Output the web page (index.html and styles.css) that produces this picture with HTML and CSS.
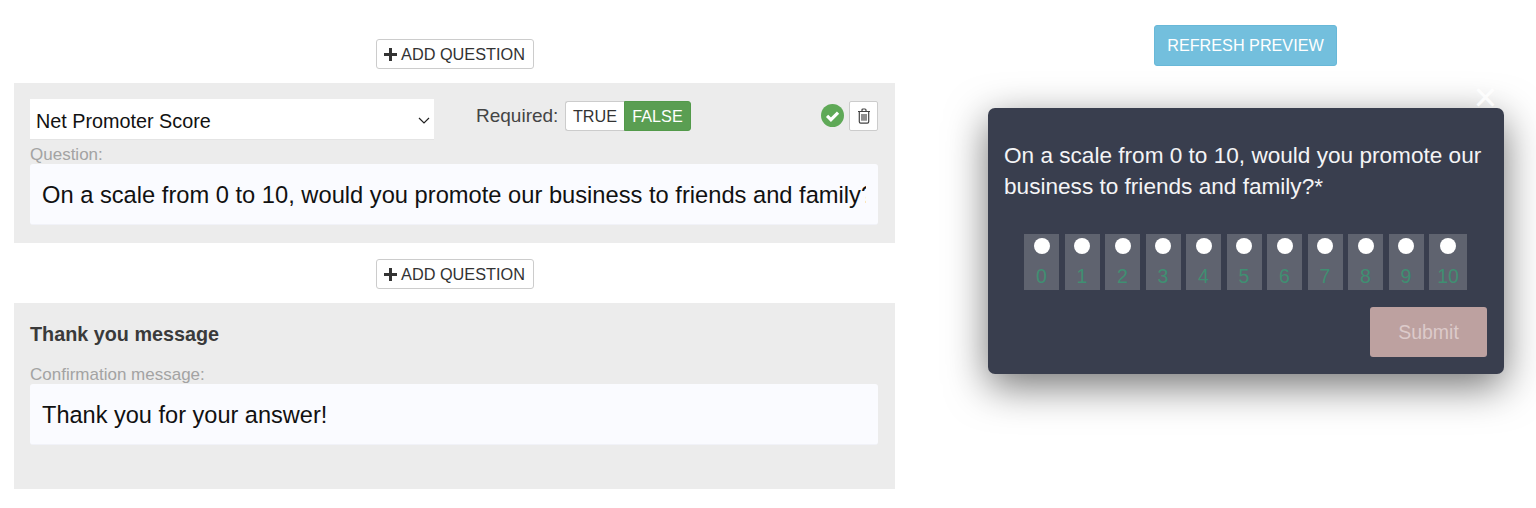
FILE: index.html
```html
<!DOCTYPE html>
<html lang="en">
<head>
  <meta charset="UTF-8">
  <title>Survey editor</title>
  <link rel="stylesheet" href="styles.css">
</head>
<body>
  <div class="editor">
    <div class="add-row">
      <button class="add-btn"><svg class="plus" viewBox="0 0 14 14"><path d="M5.4 0h3.2v5.4H14v3.2H8.6V14H5.4V8.6H0V5.4h5.4z"/></svg>ADD QUESTION</button>
    </div>
    <div class="panel">
      <div class="top-row">
        <div class="select-wrap">
          <select class="type-select"><option>Net Promoter Score</option></select>
          <svg class="chevron" viewBox="0 0 12 7"><path d="M1 1l5 5 5-5"/></svg>
        </div>
        <span class="req-label">Required:</span>
        <div class="toggle">
          <button class="toggle-btn">TRUE</button>
          <button class="toggle-btn active">FALSE</button>
        </div>
        <svg class="check" viewBox="0 0 22 22"><circle cx="11" cy="11" r="11"/><path d="M5.8 11.3l3.7 3.7 6.8-6.8"/></svg>
        <button class="trash-btn">
          <svg viewBox="0 0 14 16"><path d="M1 3.5h12M5 3.2V2q0-1 1-1h2q1 0 1 1v1.2M2.3 3.5v10.3q0 1.4 1.4 1.4h6.6q1.4 0 1.4-1.4V3.5M5 6v6.8M7 6v6.8M9 6v6.8"/></svg>
        </button>
      </div>
      <label class="field-label">Question:</label>
      <input class="text-input" type="text" value="On a scale from 0 to 10, would you promote our business to friends and family?">
    </div>
    <div class="add-row second">
      <button class="add-btn"><svg class="plus" viewBox="0 0 14 14"><path d="M5.4 0h3.2v5.4H14v3.2H8.6V14H5.4V8.6H0V5.4h5.4z"/></svg>ADD QUESTION</button>
    </div>
    <div class="panel thanks">
      <h3 class="panel-title">Thank you message</h3>
      <label class="field-label">Confirmation message:</label>
      <input class="text-input" type="text" value="Thank you for your answer!">
    </div>
  </div>

  <div class="preview">
    <button class="refresh-btn">REFRESH PREVIEW</button>
    <div class="popup">
      <span class="close">&times;</span>
      <p class="popup-question">On a scale from 0 to 10, would you promote our business to friends and family?*</p>
      <div class="scale">
        <label class="cell"><span class="dot"></span>0</label>
        <label class="cell"><span class="dot"></span>1</label>
        <label class="cell"><span class="dot"></span>2</label>
        <label class="cell"><span class="dot"></span>3</label>
        <label class="cell"><span class="dot"></span>4</label>
        <label class="cell"><span class="dot"></span>5</label>
        <label class="cell"><span class="dot"></span>6</label>
        <label class="cell"><span class="dot"></span>7</label>
        <label class="cell"><span class="dot"></span>8</label>
        <label class="cell"><span class="dot"></span>9</label>
        <label class="cell"><span class="dot"></span>10</label>
      </div>
      <div class="submit-row">
        <button class="submit">Submit</button>
      </div>
    </div>
  </div>
</body>
</html>
```

FILE: styles.css
```css
html {
  height: 100%;
}
* {
  box-sizing: border-box;
}
body {
  margin: 0;
  background: #fff;
  font-family: "Liberation Sans", Arial, sans-serif;
  display: flex;
  overflow: hidden;
  color: #333;
}
button {
  font-family: inherit;
}

/* left side */
.editor {
  width: 881px;
  margin-left: 14px;
  padding-top: 39px;
  flex: none;
}
.add-row {
  display: flex;
  justify-content: center;
  margin-bottom: 14px;
}
.add-row.second {
  margin-top: 16px;
  margin-bottom: 14px;
}
.add-btn {
  width: 158px;
  height: 30px;
  padding: 1px 0 0;
  background: #fff;
  border: 1px solid #ccc;
  border-radius: 3px;
  color: #333;
  font-size: 16.3px;
  display: flex;
  align-items: center;
  justify-content: center;
  gap: 4px;
}
.plus {
  width: 13px;
  height: 13px;
  fill: #333;
}
.panel {
  background: #ececec;
  height: 160px;
  padding: 16px 17px 16px 16px;
}
.panel.thanks {
  height: 186px;
  padding-top: 19px;
}
.top-row {
  display: flex;
  align-items: flex-start;
  height: 50px;
}
.select-wrap {
  position: relative;
  width: 404px;
  height: 41px;
  flex: none;
}
.type-select {
  appearance: none;
  width: 100%;
  height: 100%;
  border: 0;
  border-radius: 0;
  background: #fff;
  border-bottom: 1px solid #e4e4e4;
  padding: 3px 6px 0;
  font-family: inherit;
  font-size: 19.8px;
  color: #111;
}
.chevron {
  position: absolute;
  right: 4px;
  top: 18px;
  width: 12px;
  height: 7px;
  fill: none;
  stroke: #222;
  stroke-width: 1.2;
}
.req-label {
  margin-left: 42px;
  width: 89px;
  font-size: 19px;
  line-height: 34px;
  color: #444;
  flex: none;
}
.toggle {
  display: flex;
  margin-top: 2px;
  height: 30px;
}
.toggle-btn {
  height: 30px;
  width: 59px;
  padding: 0;
  background: #fff;
  border: 1px solid #ccc;
  border-right: 0;
  border-radius: 3px 0 0 3px;
  font-size: 16.2px;
  color: #333;
}
.toggle-btn.active {
  width: 67px;
  background: #5a9e52;
  border: 1px solid #529a4a;
  border-radius: 0 3px 3px 0;
  color: #fff;
}
.check {
  width: 23px;
  height: 23px;
  margin-left: auto;
  margin-top: 5px;
  margin-right: 5px;
  flex: none;
}
.check circle {
  fill: #5fa957;
}
.check path {
  fill: none;
  stroke: #fff;
  stroke-width: 3;
}
.trash-btn {
  width: 29px;
  height: 30px;
  margin-top: 2px;
  padding: 0;
  background: #fff;
  border: 1px solid #ccc;
  border-radius: 2px;
  display: flex;
  align-items: center;
  justify-content: center;
}
.trash-btn svg {
  width: 14px;
  height: 16px;
  fill: none;
  stroke: #444;
  stroke-width: 1.2;
}
.field-label {
  display: block;
  font-size: 17px;
  line-height: 12px;
  height: 15px;
  color: #a3a3a3;
}
.text-input {
  display: block;
  width: 100%;
  height: 61px;
  border: 0;
  border-bottom: 1px solid #f1f2f8;
  border-radius: 3px;
  background: #fafbff;
  padding: 2px 12px 0;
  font-family: inherit;
  font-size: 23.7px;
  color: #111;
  outline: none;
}
.panel-title {
  margin: 0;
  font-size: 19.8px;
  line-height: 24px;
  height: 41px;
  color: #3a3a3a;
}
.thanks .field-label {
  height: 21px;
  line-height: 23px;
}
.thanks .text-input {
  font-size: 23.55px;
}

/* right side */
.preview {
  width: 516px;
  margin-left: 93px;
  flex: none;
  display: flex;
  flex-direction: column;
  align-items: center;
  padding-top: 25px;
}
.refresh-btn {
  width: 183px;
  height: 41px;
  padding: 0;
  margin-right: 1px;
  margin-bottom: 42px;
  background: #73bfdd;
  border: 1px solid #68b8d8;
  border-radius: 3px;
  color: #fff;
  font-size: 16.2px;
}
.popup {
  position: relative;
  width: 516px;
  height: 266px;
  background: #393e4e;
  border-radius: 7px;
  padding: 32px 17px 0 16px;
  box-shadow: 0 12px 40px rgba(0, 0, 0, 0.55);
}
.close {
  position: absolute;
  right: 7px;
  top: -31px;
  font-size: 40px;
  line-height: 40px;
  color: rgba(255, 255, 255, 0.85);
}
.popup-question {
  margin: 0;
  color: #f4f4f6;
  font-size: 22.6px;
  line-height: 31px;
}
.scale {
  margin-top: 32px;
  display: flex;
  justify-content: center;
  gap: 5.5px;
}
.cell {
  width: 35px;
  height: 56px;
  padding: 4px 2px 0;
  background: #5f636f;
  color: #3f8f72;
  font-size: 19.5px;
  line-height: 24px;
  text-align: center;
  display: flex;
  flex-direction: column;
  align-items: center;
}
.cell:last-child {
  width: 38px;
}
.dot {
  display: block;
  width: 16px;
  height: 16px;
  border-radius: 50%;
  background: #fff;
  margin-bottom: 10px;
  flex: none;
}
.submit-row {
  display: flex;
  justify-content: flex-end;
  margin-top: 17px;
}
.submit {
  width: 117px;
  height: 50px;
  background: #bda1a0;
  border: 0;
  border-radius: 3px;
  color: #dccaca;
  font-size: 19.5px;
}
```
